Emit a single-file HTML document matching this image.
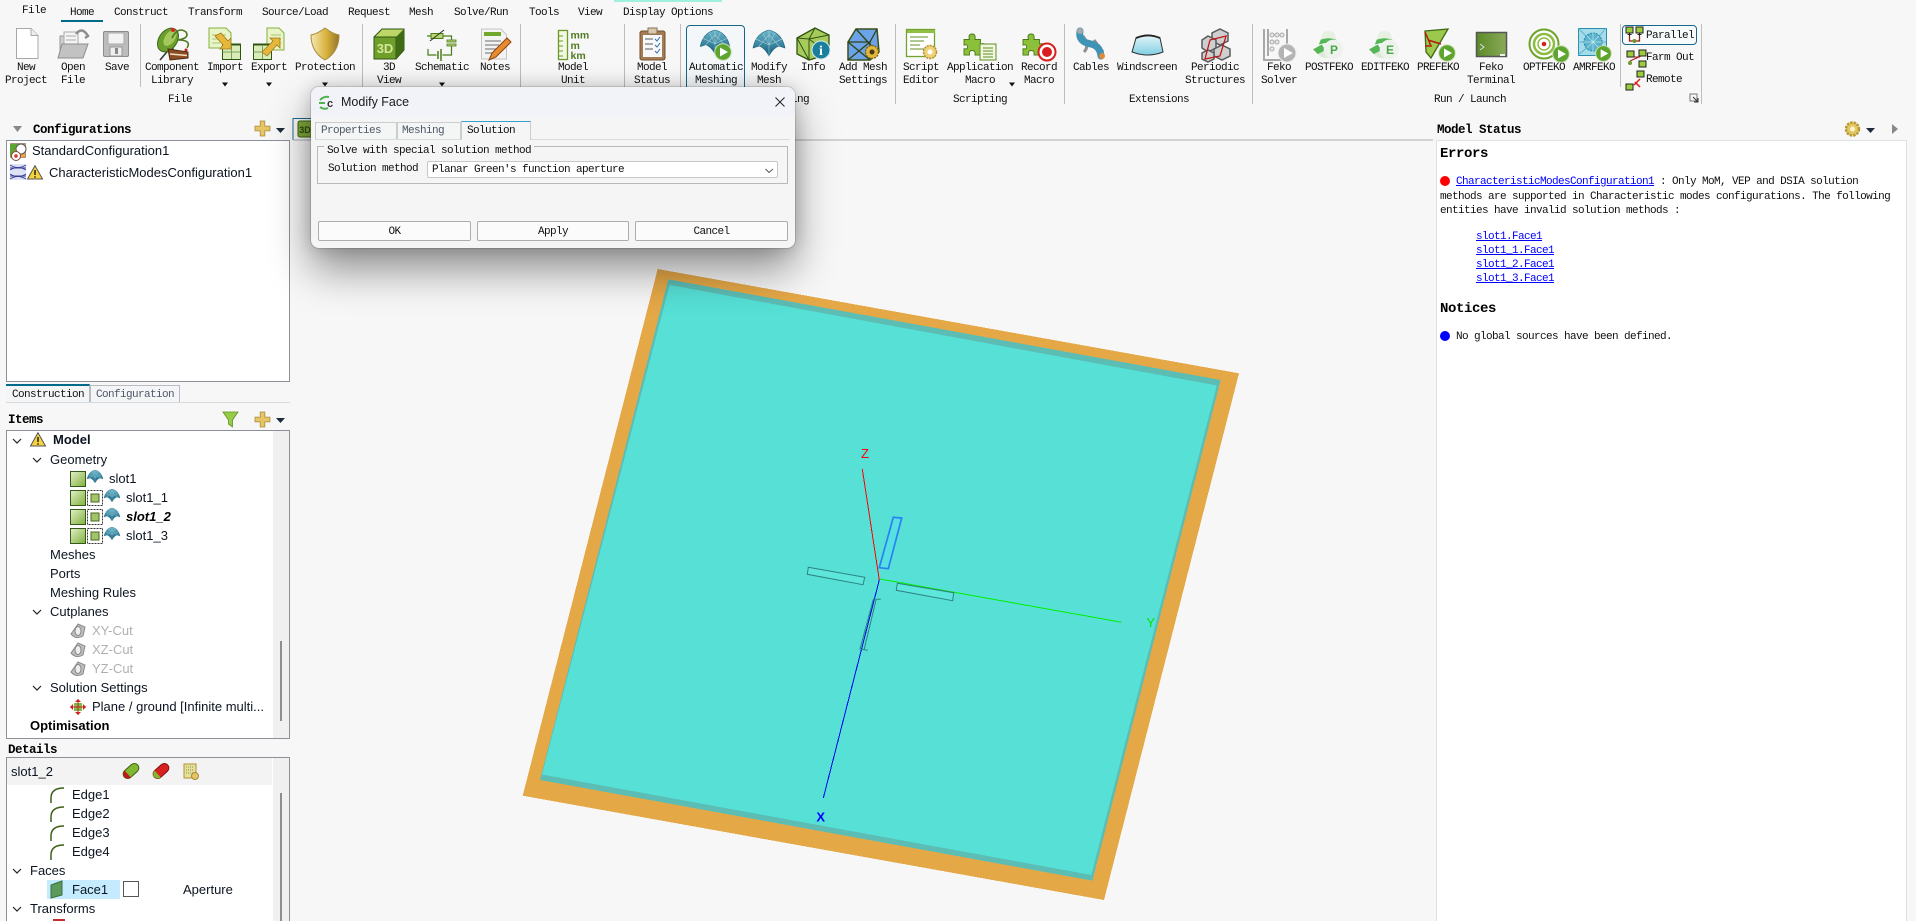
<!DOCTYPE html>
<html><head><meta charset="utf-8"><title>Modify Face</title>
<style>
html,body{margin:0;padding:0;width:1916px;height:921px;overflow:hidden;background:#f7f7f7}
#p{position:absolute;left:0;top:0;width:1916px;height:921px;overflow:hidden}
.t{position:absolute;white-space:nowrap;font:11px/14px "Liberation Mono",monospace;letter-spacing:-.6px;color:#111}
.c{transform:translateX(-50%)}
.b{font-weight:bold;font-size:12.5px;letter-spacing:-.5px;color:#000}
.h{font-weight:bold;font-size:14px;line-height:16px;letter-spacing:-.4px;color:#000}
.s{position:absolute;white-space:nowrap;font:13px/18px "Liberation Sans",sans-serif;color:#0c1420}
.g{color:#b0b0b0}
.box{position:absolute;box-sizing:border-box;background:#fff;border:1px solid #8b9099}
.l{position:absolute;background:#bdbdbd;width:1px}
a{color:#00f;text-decoration:underline}
svg{position:absolute;left:0;top:0;overflow:visible}
#dlg{position:absolute;left:311px;top:87px;width:484px;height:161px;background:#f5f5f5;border-radius:8px;box-shadow:0 22px 42px rgba(0,0,0,.42),0 0 18px rgba(0,0,0,.18);z-index:5;outline:1px solid rgba(0,0,0,.12)}
#dlg .tb{position:absolute;left:0;top:0;width:484px;height:30px;background:#f1f3f9;border-radius:8px 8px 0 0}
.btn{position:absolute;top:134px;height:20px;box-sizing:border-box;background:#fbfbfb;border:1px solid #adadad;border-radius:2px;text-align:center;font:11px/20px "Liberation Mono",monospace;letter-spacing:-.6px;color:#111}
.tab{position:absolute;box-sizing:border-box;border:1px solid #c9cdd0;border-bottom:none;background:#f4f5f5}
</style></head><body><div id="p">

<!-- top strip / menu -->
<div style="position:absolute;left:614px;top:0;width:108px;height:1.5px;background:#9ff0dd"></div>
<div style="position:absolute;left:61px;top:20px;width:42px;height:2px;background:#006a8a"></div>
<div class="t" style="left:22px;top:4px">File</div>
<div class="t" style="left:70px;top:6px">Home</div>
<div class="t" style="left:114px;top:6px">Construct</div>
<div class="t" style="left:188px;top:6px">Transform</div>
<div class="t" style="left:262px;top:6px">Source/Load</div>
<div class="t" style="left:348px;top:6px">Request</div>
<div class="t" style="left:409px;top:6px">Mesh</div>
<div class="t" style="left:454px;top:6px">Solve/Run</div>
<div class="t" style="left:529px;top:6px">Tools</div>
<div class="t" style="left:578px;top:6px">View</div>
<div class="t" style="left:623px;top:6px">Display Options</div>

<!-- separators -->
<div class="l" style="left:140px;top:24px;height:63px"></div>
<div class="l" style="left:362px;top:24px;height:80px"></div>
<div class="l" style="left:520px;top:24px;height:80px"></div>
<div class="l" style="left:624px;top:24px;height:80px"></div>
<div class="l" style="left:680px;top:24px;height:80px"></div>
<div class="l" style="left:895px;top:24px;height:80px"></div>
<div class="l" style="left:1064px;top:24px;height:80px"></div>
<div class="l" style="left:1252px;top:24px;height:80px"></div>
<div class="l" style="left:1620px;top:24px;height:63px"></div>
<div class="l" style="left:1701px;top:24px;height:80px"></div>

<div style="position:absolute;box-sizing:border-box;left:686px;top:25px;width:59px;height:70px;border:1px solid #15688a;border-radius:4px;background:#f3f7f9"></div>
<div style="position:absolute;box-sizing:border-box;left:1622px;top:25px;width:75px;height:20px;border:1px solid #15688a;border-radius:4px;background:#f8fbfc"></div>

<!-- ribbon labels -->
<div class="t c" style="left:26px;top:61px">New</div><div class="t c" style="left:26px;top:74px">Project</div>
<div class="t c" style="left:73px;top:61px">Open</div><div class="t c" style="left:73px;top:74px">File</div>
<div class="t c" style="left:117px;top:61px">Save</div>
<div class="t c" style="left:172px;top:61px">Component</div><div class="t c" style="left:172px;top:74px">Library</div>
<div class="t c" style="left:225px;top:61px">Import</div>
<div class="t c" style="left:269px;top:61px">Export</div>
<div class="t c" style="left:325px;top:61px">Protection</div>
<div class="t c" style="left:389px;top:61px">3D</div><div class="t c" style="left:389px;top:74px">View</div>
<div class="t c" style="left:442px;top:61px">Schematic</div>
<div class="t c" style="left:495px;top:61px">Notes</div>
<div class="t c" style="left:573px;top:61px">Model</div><div class="t c" style="left:573px;top:74px">Unit</div>
<div class="t c" style="left:652px;top:61px">Model</div><div class="t c" style="left:652px;top:74px">Status</div>
<div class="t c" style="left:716px;top:61px">Automatic</div><div class="t c" style="left:716px;top:74px">Meshing</div>
<div class="t c" style="left:769px;top:61px">Modify</div><div class="t c" style="left:769px;top:74px">Mesh</div>
<div class="t c" style="left:813px;top:61px">Info</div>
<div class="t c" style="left:863px;top:61px">Add Mesh</div><div class="t c" style="left:863px;top:74px">Settings</div>
<div class="t c" style="left:921px;top:61px">Script</div><div class="t c" style="left:921px;top:74px">Editor</div>
<div class="t c" style="left:980px;top:61px">Application</div><div class="t c" style="left:980px;top:74px">Macro</div>
<div class="t c" style="left:1039px;top:61px">Record</div><div class="t c" style="left:1039px;top:74px">Macro</div>
<div class="t c" style="left:1091px;top:61px">Cables</div>
<div class="t c" style="left:1147px;top:61px">Windscreen</div>
<div class="t c" style="left:1215px;top:61px">Periodic</div><div class="t c" style="left:1215px;top:74px">Structures</div>
<div class="t c" style="left:1279px;top:61px">Feko</div><div class="t c" style="left:1279px;top:74px">Solver</div>
<div class="t c" style="left:1329px;top:61px">POSTFEKO</div>
<div class="t c" style="left:1385px;top:61px">EDITFEKO</div>
<div class="t c" style="left:1438px;top:61px">PREFEKO</div>
<div class="t c" style="left:1491px;top:61px">Feko</div><div class="t c" style="left:1491px;top:74px">Terminal</div>
<div class="t c" style="left:1544px;top:61px">OPTFEKO</div>
<div class="t c" style="left:1594px;top:61px">AMRFEKO</div>
<div class="t" style="left:1646px;top:29px">Parallel</div>
<div class="t" style="left:1646px;top:51px">Farm Out</div>
<div class="t" style="left:1646px;top:73px">Remote</div>
<div class="t c" style="left:180px;top:93px">File</div>
<div class="t c" style="left:788px;top:93px">Meshing</div>
<div class="t c" style="left:980px;top:93px">Scripting</div>
<div class="t c" style="left:1159px;top:93px">Extensions</div>
<div class="t c" style="left:1470px;top:93px">Run / Launch</div>

<!-- canvas and icons -->
<svg width="1916" height="921" viewBox="0 0 1916 921">
<defs>
<linearGradient id="gr" x1="0" y1="0" x2="1" y2="1"><stop offset="0" stop-color="#e4f0c8"/><stop offset="1" stop-color="#7fb03c"/></linearGradient>
<linearGradient id="gold" x1="0" y1="0" x2="1" y2="0"><stop offset="0" stop-color="#f4e8b0"/><stop offset=".55" stop-color="#d8b23c"/><stop offset="1" stop-color="#96752a"/></linearGradient>
<linearGradient id="dome" x1="0" y1="0" x2="0" y2="1"><stop offset="0" stop-color="#6db6ca"/><stop offset="1" stop-color="#125f7c"/></linearGradient>
<linearGradient id="ter" x1="0" y1="0" x2="1" y2="0"><stop offset="0" stop-color="#5c8a26"/><stop offset="1" stop-color="#8aaa5c"/></linearGradient>
<linearGradient id="ws" x1="0" y1="0" x2="0" y2="1"><stop offset="0" stop-color="#e6f6fa"/><stop offset="1" stop-color="#7fcfe2"/></linearGradient>
<symbol id="dm" viewBox="0 0 32 26" overflow="visible"><path d="M0 18Q3 3 16 0Q29 3 32 18L26 16Q20 18 16 26Q12 18 6 16Z" fill="url(#dome)" stroke="#125f7c" stroke-width=".6"/><path d="M16 0V26M6 16L16 5L26 16M3 9L16 15L29 9M10 3L16 15L22 3" stroke="#b8e0ea" stroke-width=".7" fill="none" opacity=".7"/></symbol>
<symbol id="pl" viewBox="0 0 18 18" overflow="visible"><circle cx="9" cy="9" r="8.300" fill="#5da52e" stroke="#cfe0b8" stroke-width="1"/><path d="M6 4.500L14 9L6 13.500Z" fill="#fff"/></symbol>
<symbol id="arr" viewBox="0 0 6 4" overflow="visible"><path d="M0 0H6L3 4Z" fill="#111"/></symbol>
<symbol id="dd" viewBox="0 0 9 5" overflow="visible"><path d="M0 0H9L4.500 5Z" fill="#1c2c3c"/></symbol>
<symbol id="plus" viewBox="0 0 16 16" overflow="visible"><path d="M5.500 0H10.500V5.500H16V10.500H10.500V16H5.500V10.500H0V5.500H5.500Z" fill="#e5c666" stroke="#a8883a" stroke-width=".8"/></symbol>
<symbol id="warn" viewBox="0 0 16 15" overflow="visible"><path d="M8 .7L15.500 14H.5Z" fill="#f6d33c" stroke="#555" stroke-width="1"/><path d="M8 5V10M8 11.300V12.800" stroke="#222" stroke-width="1.500"/></symbol>
<symbol id="sq" viewBox="0 0 16 16" overflow="visible"><rect x=".5" y=".5" width="15" height="15" fill="url(#gr)" stroke="#35591a"/></symbol>
<symbol id="ds" viewBox="0 0 16 16" overflow="visible"><rect x=".5" y=".5" width="15" height="15" fill="none" stroke="#333" stroke-dasharray="2 1"/><rect x="4" y="4" width="8" height="8" fill="#a3c56a" stroke="#4a6a20"/></symbol>
<symbol id="cut" viewBox="0 0 16 16" overflow="visible"><path d="M1 11L8 1L15 4L13 13Q6 17 1 11Z" fill="#bdbdbd" stroke="#8a8a8a"/><ellipse cx="8" cy="8" rx="3" ry="4.500" fill="#eee" stroke="#888"/></symbol>
<symbol id="arc" viewBox="0 0 16 16" overflow="visible"><path d="M1 16V11Q1 1 14 1" stroke="#3e5f18" stroke-width="1.500" fill="none"/></symbol>
<symbol id="puz" viewBox="0 0 24 26" overflow="visible"><path d="M0 7H6Q4 1 9 1Q13 1 12 7H18V12Q24 10 24 15Q24 20 18 18V24H12Q13 19 9 19Q5 19 6 24H0V17Q4 18 4 15Q4 12 0 13Z" fill="#8dc03a" stroke="#4a7a18" stroke-width="1"/></symbol>
<symbol id="pf" viewBox="0 0 32 30" overflow="visible"><path d="M10 3Q16 -1 22 3L24 10H8Z" fill="#e6f1e2"/><path d="M8 10Q16 7 24 10L26 14Q16 12 6 15Z" fill="#55b656"/><path d="M0 20L9 15L13 21L5 25Z" fill="#55b656"/><path d="M5 25L13 21L18 28Q10 31 5 25Z" fill="#dcebd8"/><circle cx="21" cy="20" r="10" fill="#eef2ec"/></symbol>
<symbol id="net" viewBox="0 0 18 17" overflow="visible"><rect x="0" y="0" width="7" height="6" fill="#9ccc3c" stroke="#222"/><rect x="10" y="0" width="7" height="6" fill="#9ccc3c" stroke="#222"/><path d="M3.500 6V9M13.500 6V9M1.500 7.500H5.500M11.500 7.500H15.500" stroke="#222"/><path d="M3.500 9V14H13.500V9" fill="none" stroke="#9b1c14" stroke-width="1.300"/><circle cx="8.500" cy="14" r="2" fill="#6a9a30"/></symbol>
</defs>

<!-- 3D tab and line -->
<path d="M293 140V118.500H318" stroke="#1a6d8c" fill="none"/>
<path d="M293 140H1433" stroke="#a9adb2"/>
<rect x="298" y="121" width="16" height="16" rx="2" fill="#7fa93a" stroke="#3f5f12"/>
<text x="305" y="133" text-anchor="middle" font-family="Liberation Sans" font-size="9" font-weight="bold" fill="#2f4a0c">3D</text>

<!-- Plane -->
<g shape-rendering="crispEdges">
<polygon points="657.700,269 1239,373.300 1104,900 522.700,795.700" fill="#e5a847"/>
<polygon points="668.300,279.300 1220.700,380 1092.400,880.700 540,780" fill="#5cbdb5"/>
<polygon points="669.600,285 1216.800,385.500 1091.300,875 542,774.500" fill="#56e0d6"/>
<line x1="862.300" y1="469" x2="879.300" y2="580" stroke="#f00" stroke-width="1"/>
<line x1="879.300" y1="580" x2="823.300" y2="798" stroke="#0000f0" stroke-width="1"/>
<line x1="880" y1="579" x2="1121.700" y2="622.300" stroke="#00f000" stroke-width="1"/>
</g>
<polygon points="808.300,567.300 864.700,577.300 863,584.700 807.300,574.300" fill="#5ce6dc" stroke="#2f8380"/>
<polygon points="897.300,583.300 953.700,592.700 952.700,600.700 896.300,590.300" fill="#5ce6dc" stroke="#2f8380"/>
<polygon points="893.300,517.300 901.700,518 888.300,568.700 879.300,567.700" fill="#56e0e2" stroke="#2b80f2" stroke-width="1.700"/>
<path d="M880.700 599.300H873.300L860 649L867.700 650.300M876 600L864 650" fill="none" stroke="#2f8380"/>
<text x="865" y="458" text-anchor="middle" font-family="Liberation Sans" font-size="13" fill="#f00">Z</text>
<text x="820.700" y="821.500" text-anchor="middle" font-family="Liberation Sans" font-size="13" font-weight="bold" fill="#00f">X</text>
<text x="1150.700" y="627" text-anchor="middle" font-family="Liberation Sans" font-size="13" fill="#00e600">Y</text>

<!-- New -->
<path d="M16.500 28.500H31L38 35.500V58.500H16.500Z" fill="#fff" stroke="#a8a8a8"/><path d="M31 28.500V35.500H38" fill="#eee" stroke="#a8a8a8"/>
<!-- Open -->
<path d="M60 36H78V58H60Z" fill="#cfcfcf" stroke="#999"/><path d="M64 32H78V48H64Z" fill="#f4f4f4" stroke="#aaa"/><path d="M66 36H76M66 40H76M66 44H76" stroke="#aaa"/><path d="M58 58L62 44H88L83 58Z" fill="#c2c2c2" stroke="#8e8e8e"/><path d="M76 34Q82 26 88 36L85 38" fill="none" stroke="#8e8e8e" stroke-width="2.500"/>
<!-- Save -->
<rect x="103.500" y="31.500" width="25" height="25" rx="1.500" fill="#bcbcbc" stroke="#8c8c8c"/><rect x="108" y="33" width="16" height="11" fill="#f3f3f3" stroke="#aaa"/><rect x="110" y="47" width="12" height="9" fill="#eee" stroke="#999"/><rect x="115" y="48" width="3" height="6" fill="#888"/>
<!-- Component library -->
<path d="M172 46L160 60M172 46L176 58" stroke="#333" stroke-width="1.500"/>
<ellipse cx="168" cy="40" rx="9" ry="13" transform="rotate(35 168 40)" fill="#6c9e2c" stroke="#3f6618"/><ellipse cx="170" cy="38" rx="5" ry="9" transform="rotate(35 170 38)" fill="#a4c85c"/>
<path d="M172 38Q178 26 186 32Q190 38 178 40Q192 40 187 48" fill="none" stroke="#4f7a24" stroke-width="1.600"/><circle cx="173" cy="30" r="2" fill="#e02222"/><circle cx="186" cy="50" r="1.500" fill="#d01818"/>
<path d="M168 49L188 52V58L170 60Z" fill="#8c4d22" stroke="#4e2a10"/><path d="M170 54L187 55.500" stroke="#f0e0c0" stroke-width="1.500"/>
<!-- Import -->
<path d="M209 28H226L231 33V48H209Z" fill="#e9f4c8" stroke="#86b040"/><path d="M212 35H226M212 39H226M212 43H220" stroke="#a8c868"/><rect x="222.500" y="44.500" width="18" height="15" fill="#d8ecb8" stroke="#2f5410"/><path d="M222 44.500H241" stroke="#2f5410" stroke-width="2"/><path d="M222.500 52H240M231.500 45V59" stroke="#7f9f58"/><path d="M215 36L221 33L228 41L231 38V49H220L223 45Z" fill="#e5b83c" stroke="#a07a1c" stroke-width=".8"/>
<!-- Export -->
<path d="M267 28H279L284 33V50H267Z" fill="#e9f4c8" stroke="#86b040"/><path d="M271 35H281M271 39H281M271 43H281" stroke="#a8c868"/><rect x="253.500" y="44.500" width="18" height="15" fill="#d8ecb8" stroke="#2f5410"/><path d="M253 44.500H272" stroke="#2f5410" stroke-width="2"/><path d="M253.500 52H271M262.500 45V59" stroke="#7f9f58"/><path d="M262 52L273 41L270 38H280V48L277 45L267 56Z" fill="#e5b83c" stroke="#a07a1c" stroke-width=".8"/>
<!-- Protection -->
<path d="M325 28Q317 34 311 35Q311 52 325 60Q339 52 339 35Q333 34 325 28Z" fill="url(#gold)" stroke="#a98a3c"/>
<!-- 3D -->
<path d="M374 37L382 29H404V50L396 59H374Z" fill="#bcd668" stroke="#2f5410"/><rect x="374" y="37" width="22" height="22" fill="#6f9f2a" stroke="#2f5410"/><path d="M396 37L404 29V50L396 59Z" fill="#3f6a16"/><text x="385" y="53" text-anchor="middle" font-family="Liberation Sans" font-size="13" font-weight="bold" fill="#d4e89a">3D</text>
<!-- Schematic -->
<path d="M427 36H431M443 36H451.500V40M451.500 45V55H442.500M436.500 55H428V49" fill="none" stroke="#4b7c18" stroke-width="1.200"/><rect x="431" y="33.500" width="12" height="5" fill="#b6d670" stroke="#4b7c18"/><path d="M430 41L444 30" stroke="#333" stroke-width="1.100"/><rect x="447" y="40" width="9" height="2" fill="#b6d670" stroke="#4b7c18" stroke-width=".8"/><rect x="447" y="44" width="9" height="2" fill="#b6d670" stroke="#4b7c18" stroke-width=".8"/><path d="M438 51V59M441 49V61" stroke="#4b7c18" stroke-width="1.500"/>
<!-- Notes -->
<path d="M481.500 29H501L506.500 35V59H481.500Z" fill="#f3f3f3" stroke="#c4c4c4"/><rect x="484" y="32" width="17" height="4" fill="#6fa82c"/><path d="M485 41H501M485 45H499M485 49H496M485 53H493" stroke="#888" stroke-width="1.300"/><path d="M489 60L492 53L507 38L511 42L496 57Z" fill="#e88a2e" stroke="#8a4410"/>
<!-- Model unit -->
<rect x="558.500" y="30.500" width="9" height="29" fill="#f2f7e2" stroke="#6c9a2a" stroke-width="1.300"/><path d="M559 36H563M559 41H563M559 46H563M559 51H563M559 56H563" stroke="#6c9a2a"/>
<text x="570.500" y="38.500" font-family="Liberation Sans" font-size="10.500" font-weight="bold" fill="#4f7a20">mm</text><text x="570.500" y="49" font-family="Liberation Sans" font-size="10.500" font-weight="bold" fill="#4f7a20">m</text><text x="570.500" y="59" font-family="Liberation Sans" font-size="10.500" font-weight="bold" fill="#4f7a20">km</text>
<!-- Model status -->
<rect x="640" y="31" width="25" height="29" rx="2" fill="#a57b53" stroke="#6f5030"/><rect x="643" y="35" width="19" height="22" fill="#f8f8f8"/><rect x="648" y="28" width="9" height="6" fill="#d8c8b0" stroke="#8a7050"/><path d="M645 39H653M645 44H653M645 49H653" stroke="#777" stroke-width="1.200"/><path d="M655 39L657 41L660 37M655 45L657 47L660 43M655 51L657 53L660 49" stroke="#2b6fb0" fill="none"/>
<!-- Auto mesh -->
<use href="#dm" x="700" y="30" width="30" height="24"/><use href="#pl" x="714" y="43" width="18" height="18"/>
<!-- Modify mesh -->
<use href="#dm" x="753" y="30" width="32" height="26"/>
<!-- Info -->
<path d="M797 38L815 28L829 35V54L809 60L797 54Z" fill="#a6cb5c" stroke="#2f5410" stroke-width="1.300"/><path d="M797 38L809 60M809 39V60M797 38L809 39L829 35M809 39L829 54M815 28L809 39" stroke="#2f5410" fill="none"/><circle cx="821" cy="50" r="9" fill="#1a7f9f" stroke="#d8ecf2"/><text x="821" y="55" text-anchor="middle" font-family="Liberation Serif" font-size="14" font-weight="bold" fill="#fff">i</text>
<!-- Add mesh -->
<path d="M848 42L856 29H877L879 52L870 60H848Z" fill="#6ba2e8" stroke="#3a4f1a" stroke-width="1.500"/><path d="M848 42H870V60M870 42L877 29M848 42L870 60M870 42L848 60M856 29L877 52" stroke="#2e4410" stroke-width="1.300" fill="none"/><circle cx="872" cy="52" r="6.500" fill="#e0b83c" stroke="#7a5c10" stroke-width="1.300" stroke-dasharray="2 1"/><circle cx="872" cy="52" r="2.500" fill="#4a3810"/>
<!-- Script -->
<rect x="906.500" y="29.500" width="28" height="27" fill="#fff" stroke="#71a32c" stroke-width="1.300"/><rect x="907" y="30" width="28" height="3" fill="#8fc044"/><path d="M910 37H928M910 41H924M910 45H920M910 49H924" stroke="#5f8f20"/><circle cx="930" cy="52" r="6.500" fill="#edd27a" stroke="#b48e2a" stroke-width="1.500" stroke-dasharray="2 1"/><circle cx="930" cy="52" r="2.500" fill="#fff"/>
<!-- App macro -->
<use href="#puz" x="964" y="33" width="22" height="24"/><rect x="980" y="44" width="16" height="16" fill="#f2f7e2" stroke="#5f8f20"/><path d="M983 48H993M983 51H993M983 54H993M983 57H993" stroke="#5f8f20"/>
<!-- Record macro -->
<use href="#puz" x="1023" y="33" width="22" height="24"/><circle cx="1047" cy="52" r="8.500" fill="#fff" stroke="#d91f1f" stroke-width="2"/><circle cx="1047" cy="52" r="5" fill="#d91f1f"/>
<!-- Cables -->
<path d="M1083 36Q1090 46 1084 52M1094 40Q1098 46 1103 52" stroke="#8f8f8f" stroke-width="3" fill="none"/><path d="M1080 31Q1078 42 1091 44Q1100 46 1101 56" stroke="#3f93b4" stroke-width="7" fill="none" stroke-linecap="round"/><circle cx="1102" cy="56" r="3" fill="#e08a3c"/><circle cx="1080" cy="31" r="3" fill="#a8a8a8"/>
<!-- Windscreen -->
<path d="M1136 38Q1148 32 1160 38L1163 52Q1148 58 1132 52Z" fill="url(#ws)" stroke="#333" stroke-width="1"/><path d="M1136 38Q1148 33 1160 38" stroke="#222" stroke-width="1.800" fill="none"/>
<!-- Periodic -->
<g fill="#cfcfcf" stroke="#5a5a5a" stroke-width="1.500"><polygon points="1220,29 1228,33 1228,41 1220,45 1212,41 1212,33"/><polygon points="1208,36 1216,40 1216,48 1208,52 1202,48 1202,40"/><polygon points="1222,45 1230,49 1230,56 1222,60 1214,56 1214,49"/><polygon points="1208,50 1214,53 1214,59 1208,62 1202,59 1202,53"/></g><path d="M1210 40L1226 36L1220 56L1205 59Z" fill="none" stroke="#c01818" stroke-width="1.300"/>
<!-- Feko solver -->
<path d="M1264 29V60H1288M1268 29V56M1287 29V50" fill="none" stroke="#a8a8a8" stroke-width="2"/><g stroke="#aaa" fill="#e8e8e8"><circle cx="1272" cy="35" r="2"/><circle cx="1277" cy="35" r="2"/><circle cx="1282" cy="35" r="2"/><circle cx="1272" cy="42" r="2"/><circle cx="1277" cy="42" r="2"/><circle cx="1272" cy="49" r="2"/></g><circle cx="1287" cy="53" r="9" fill="#b4b4b4" stroke="#eee"/><path d="M1284 48L1293 53L1284 58Z" fill="#fff"/>
<!-- POST / EDIT -->
<use href="#pf" x="1313" y="30" width="31" height="29"/><text x="1334" y="54" text-anchor="middle" font-family="Liberation Sans" font-size="12" font-weight="bold" fill="#48a84a">P</text>
<use href="#pf" x="1369" y="30" width="31" height="29"/><text x="1390" y="54" text-anchor="middle" font-family="Liberation Sans" font-size="12" font-weight="bold" fill="#48a84a">E</text>
<!-- PRE -->
<path d="M1425 31L1448 29L1438 46L1431 58L1426 52Z" fill="#9cc84c" stroke="#406a14" stroke-width="1.300"/><path d="M1425 32L1431 46H1425M1428 40L1441 44" stroke="#b31a12" stroke-width="1.500" fill="none"/><use href="#pl" x="1438" y="44" width="18" height="18"/>
<!-- Terminal -->
<rect x="1476.500" y="32.500" width="30" height="24" fill="url(#ter)" stroke="#555" stroke-width="1.500"/><path d="M1480 44L1484 47L1480 50" stroke="#ddd" fill="none"/><rect x="1500" y="54" width="5" height="2" fill="#eee"/>
<!-- OPT -->
<circle cx="1544" cy="44" r="14.500" fill="#fff" stroke="#6ca32c" stroke-width="2"/><circle cx="1544" cy="44" r="10" fill="none" stroke="#8cbc44" stroke-width="2.500"/><circle cx="1544" cy="44" r="6" fill="none" stroke="#8cbc44" stroke-width="1.500"/><circle cx="1544" cy="44" r="2.300" fill="#d91f1f"/><use href="#pl" x="1552" y="45" width="18" height="18"/>
<!-- AMR -->
<rect x="1578.500" y="28.500" width="28" height="27" fill="#a4dcea" stroke="#2a8eb0"/><path d="M1578 28L1588 38M1606 28L1598 38M1578 55L1588 47M1606 55L1598 47M1578 42H1584M1602 42H1606" stroke="#5fb2cc"/><circle cx="1593" cy="42" r="9" fill="#5ab2cc" stroke="#2f8aa8" stroke-dasharray="2 1"/><path d="M1584 42H1602M1593 33V51M1587 36L1599 48M1599 36L1587 48" stroke="#bfe6ee" stroke-width=".7"/><use href="#pl" x="1595" y="45" width="17" height="17"/>
<!-- Parallel etc -->
<use href="#net" x="1626" y="27" width="18" height="17"/>
<g transform="translate(1627,50)"><path d="M7 7L13 7M3 11L14 6" stroke="#b01818" fill="none"/><rect x="0" y="1" width="7" height="6" fill="#9ccc3c" stroke="#222"/><rect x="12" y="0" width="7" height="6" fill="#9ccc3c" stroke="#222"/><rect x="12" y="11" width="7" height="6" fill="#9ccc3c" stroke="#222"/><circle cx="3" cy="13" r="2" fill="#6a9a30"/></g>
<g transform="translate(1626,71)"><rect x="0" y="13" width="7" height="6" fill="#9ccc3c" stroke="#222"/><rect x="11" y="0" width="7" height="6" fill="#9ccc3c" stroke="#222"/><path d="M8 14L14 8M9 11L14 16" stroke="#e01818" stroke-width="1.500" fill="none"/></g>
<path d="M1690 94H1697V101H1690Z" fill="none" stroke="#777"/><path d="M1693 97L1698 102M1698 98V102H1694" stroke="#333" fill="none"/>

<!-- dropdown arrows -->
<use href="#arr" x="222" y="82.500" width="6" height="4"/><use href="#arr" x="266" y="82.500" width="6" height="4"/><use href="#arr" x="322" y="82.500" width="6" height="4"/><use href="#arr" x="439" y="82.500" width="6" height="4"/><use href="#arr" x="1009" y="82.500" width="6" height="4"/>

<!-- Panel icons -->
<path d="M13 126H22L17.500 132Z" fill="#888"/>
<use href="#plus" x="255" y="121" width="15" height="15"/><use href="#dd" x="276" y="128" width="9" height="5"/>
<use href="#plus" x="255" y="412" width="15" height="15"/><use href="#dd" x="276" y="418" width="9" height="5"/>
<path d="M223 412H238L232.500 420V427L228.500 424V420Z" fill="#96cc48" stroke="#5e8f22" stroke-width=".8"/>
<!-- Gear / right -->
<circle cx="1852.500" cy="129" r="6.500" fill="#e2c765" stroke="#b89a34" stroke-width="2.500" stroke-dasharray="2.500 1"/><circle cx="1852.500" cy="129" r="2.500" fill="#fff5c8"/>
<use href="#dd" x="1866" y="128" width="9" height="5"/>
<path d="M1892 124L1898 129L1892 134Z" fill="#888"/>
</svg>

<!-- Configurations -->
<div class="t b" style="left:33px;top:123px">Configurations</div>
<div class="box" style="left:6px;top:140px;width:284px;height:242px"></div>
<div class="t b" style="left:8px;top:413px">Items</div>
<div class="t b" style="left:8px;top:743px">Details</div>
<div class="s" style="left:32px;top:142px">StandardConfiguration1</div>
<div class="s" style="left:49px;top:164px">CharacteristicModesConfiguration1</div>
<svg width="1916" height="921" viewBox="0 0 1916 921" style="z-index:2">
<rect x="10.500" y="143.500" width="15" height="14" fill="#f4a040" stroke="#555" stroke-width=".5"/><path d="M10 144H20L10 157Z" fill="#5da52e"/><circle cx="21" cy="149" r="5" fill="#fff" stroke="#555"/><circle cx="16" cy="156" r="4.500" fill="#fff" stroke="#7a4a3c"/><circle cx="16" cy="156" r="1.800" fill="#d93030"/>
<rect x="10" y="164" width="16" height="16" fill="#dfe2f4"/><path d="M10 165Q18 170 26 165M10 170Q18 165 26 170M10 174Q18 179 26 174M10 179Q18 174 26 179M10 168H26M10 176H26" stroke="#3b3f9c" fill="none"/>
<use href="#warn" x="27" y="165" width="16" height="15"/>
</svg>

<!-- Bottom tabs -->
<div style="position:absolute;left:6px;top:402px;width:284px;height:1px;background:#d8dbde"></div>
<div style="position:absolute;box-sizing:border-box;left:6px;top:384px;width:84px;height:18px;background:#f4f5f6;border-top:2px solid #006a8a;border-right:1px solid #b8bcc2"></div>
<div style="position:absolute;box-sizing:border-box;left:90px;top:385px;width:90px;height:17px;background:#f4f5f6;border:1px solid #b8bcc2;border-bottom:none"></div>
<div class="t" style="left:12px;top:388px;font-size:11px">Construction</div>
<div class="t" style="left:96px;top:388px;color:#4e5868">Configuration</div>

<!-- Items box -->
<div class="box" style="left:6px;top:430px;width:284px;height:309px"></div>
<div style="position:absolute;left:273px;top:431px;width:16px;height:307px;background:#f0f0f0"></div>
<div style="position:absolute;left:280px;top:641px;width:2px;height:80px;background:#8e8e8e"></div>

<svg width="1916" height="921" viewBox="0 0 1916 921" style="z-index:2">
<g fill="none" stroke="#222" stroke-width="1.200"><path d="M13 439L17 443L21 439"/><path d="M33 458L37 462L41 458"/><path d="M33 610L37 614L41 610"/><path d="M33 686L37 690L41 686"/></g>
<use href="#warn" x="30" y="432" width="16" height="15"/>
<use href="#sq" x="70" y="471" width="16" height="16"/><use href="#dm" x="87" y="470" width="16" height="13"/>
<use href="#sq" x="70" y="490" width="16" height="16"/><use href="#ds" x="87" y="490" width="16" height="16"/><use href="#dm" x="104" y="489" width="16" height="13"/>
<use href="#sq" x="70" y="509" width="16" height="16"/><use href="#ds" x="87" y="509" width="16" height="16"/><use href="#dm" x="104" y="508" width="16" height="13"/>
<use href="#sq" x="70" y="528" width="16" height="16"/><use href="#ds" x="87" y="528" width="16" height="16"/><use href="#dm" x="104" y="527" width="16" height="13"/>
<use href="#cut" x="70" y="623" width="16" height="16"/><use href="#cut" x="70" y="642" width="16" height="16"/><use href="#cut" x="70" y="661" width="16" height="16"/>
<g transform="translate(78,707)"><rect x="-4" y="-4" width="8" height="8" fill="#7ac04a"/><path d="M-8 0L-5 -3V3ZM8 0L5 -3V3ZM0 -8L-3 -5H3ZM0 8L-3 5H3Z" fill="#d02020"/><path d="M-8 0H8M0 -8V8" stroke="#d02020"/></g>
</svg>

<div class="s" style="left:53px;top:431px;font-weight:bold">Model</div>
<div class="s" style="left:50px;top:451px">Geometry</div>
<div class="s" style="left:109px;top:470px">slot1</div>
<div class="s" style="left:126px;top:489px">slot1_1</div>
<div class="s" style="left:126px;top:508px;font-weight:bold;font-style:italic;color:#000">slot1_2</div>
<div class="s" style="left:126px;top:527px">slot1_3</div>
<div class="s" style="left:50px;top:546px">Meshes</div>
<div class="s" style="left:50px;top:565px">Ports</div>
<div class="s" style="left:50px;top:584px">Meshing Rules</div>
<div class="s" style="left:50px;top:603px">Cutplanes</div>
<div class="s g" style="left:92px;top:622px">XY-Cut</div>
<div class="s g" style="left:92px;top:641px">XZ-Cut</div>
<div class="s g" style="left:92px;top:660px">YZ-Cut</div>
<div class="s" style="left:50px;top:679px">Solution Settings</div>
<div class="s" style="left:92px;top:698px">Plane / ground [Infinite multi...</div>
<div class="s" style="left:30px;top:717px;font-weight:bold;color:#000">Optimisation</div>

<!-- Details box -->
<div class="box" style="left:6px;top:757px;width:284px;height:170px"></div>
<div style="position:absolute;left:7px;top:758px;width:265px;height:27px;background:#f3f3f3"></div>
<div style="position:absolute;left:273px;top:758px;width:16px;height:163px;background:#f0f0f0"></div>
<div style="position:absolute;left:280px;top:793px;width:2px;height:128px;background:#8e8e8e"></div>
<div style="position:absolute;left:47px;top:880px;width:73px;height:19px;background:#c4ebff"></div>
<div style="position:absolute;box-sizing:border-box;left:123px;top:881px;width:16px;height:16px;background:#fff;border:1px solid #555"></div>
<svg width="1916" height="921" viewBox="0 0 1916 921" style="z-index:2">
<use href="#arc" x="50" y="787" width="16" height="16"/><use href="#arc" x="50" y="806" width="16" height="16"/><use href="#arc" x="50" y="825" width="16" height="16"/><use href="#arc" x="50" y="844" width="16" height="16"/>
<g transform="translate(131,771) rotate(-42)"><rect x="-9" y="-4.500" width="18" height="9" rx="4.500" fill="#82b830" stroke="#3c5e10"/><path d="M-9 0A4.500 4.500 0 0 1 -4.500 -4.500V4.500A4.500 4.500 0 0 1 -9 0Z" fill="#c01818"/></g>
<g transform="translate(161,771) rotate(-42)"><rect x="-9" y="-4.500" width="18" height="9" rx="4.500" fill="#d82020" stroke="#801010"/><path d="M-9 0A4.500 4.500 0 0 1 -4.500 -4.500V4.500A4.500 4.500 0 0 1 -9 0Z" fill="#82b830"/></g>
<rect x="184" y="764" width="12" height="14" fill="#e8df9c" stroke="#b09030"/><path d="M186 767H194M186 770H194M186 773H194" stroke="#7a9a4a" stroke-dasharray="1 1"/><circle cx="195" cy="776" r="3.500" fill="#e5c666" stroke="#a8883a"/>
<path d="M51 885L62 881V895L51 898Z" fill="#5c9a5c" stroke="#3a703a"/>
<path d="M13 869L17 873L21 869M13 907L17 911L21 907" fill="none" stroke="#222" stroke-width="1.200"/>
<rect x="53" y="919" width="12" height="2" fill="#c03030"/>
</svg>
<div class="s" style="left:11px;top:763px">slot1_2</div>
<div class="s" style="left:72px;top:786px">Edge1</div>
<div class="s" style="left:72px;top:805px">Edge2</div>
<div class="s" style="left:72px;top:824px">Edge3</div>
<div class="s" style="left:72px;top:843px">Edge4</div>
<div class="s" style="left:30px;top:862px">Faces</div>
<div class="s" style="left:72px;top:881px">Face1</div>
<div class="s" style="left:183px;top:881px">Aperture</div>
<div class="s" style="left:30px;top:900px">Transforms</div>

<!-- Right panel -->
<div class="t b" style="left:1437px;top:123px">Model Status</div>
<div style="position:absolute;box-sizing:border-box;left:1436px;top:140px;width:471px;height:790px;background:#fff;border:1px solid #e0e0e0"></div>
<div class="t h" style="left:1440px;top:146px">Errors</div>
<svg width="1916" height="921" viewBox="0 0 1916 921" style="z-index:2"><circle cx="1445" cy="181" r="5" fill="#f00"/><circle cx="1445" cy="336" r="5" fill="#00f"/></svg>
<div class="t" style="left:1456px;top:175px"><a>CharacteristicModesConfiguration1</a> : Only MoM, VEP and DSIA solution</div>
<div class="t" style="left:1440px;top:190px">methods are supported in Characteristic modes configurations. The following</div>
<div class="t" style="left:1440px;top:204px">entities have invalid solution methods :</div>
<div class="t" style="left:1476px;top:230px"><a>slot1.Face1</a></div>
<div class="t" style="left:1476px;top:244px"><a>slot1_1.Face1</a></div>
<div class="t" style="left:1476px;top:258px"><a>slot1_2.Face1</a></div>
<div class="t" style="left:1476px;top:272px"><a>slot1_3.Face1</a></div>
<div class="t h" style="left:1440px;top:301px">Notices</div>
<div class="t" style="left:1456px;top:330px">No global sources have been defined.</div>

<!-- Dialog -->
<div id="dlg">
 <div class="tb"></div>
 <svg width="484" height="161" viewBox="0 0 484 161">
  <path d="M9 13Q13 9 18 10M8 16H14M9 20Q13 23 17 21" stroke="#4fb04f" stroke-width="2" fill="none"/>
  <text x="16" y="20" font-family="Liberation Sans" font-size="11" font-weight="bold" fill="#333">c</text>
  <path d="M464.500 10.500L473.500 19.500M473.500 10.500L464.500 19.500" stroke="#222" stroke-width="1"/>
 </svg>
 <div class="s" style="left:30px;top:6px;font-size:12.500px;color:#1a1a1a">Modify Face</div>
 <div style="position:absolute;left:4px;top:52px;width:475px;height:1px;background:#d8dde0"></div>
 <div class="tab" style="left:4px;top:35px;width:82px;height:17px"></div>
 <div class="tab" style="left:86px;top:35px;width:64px;height:17px"></div>
 <div class="tab" style="left:150px;top:34px;width:70px;height:19px;border-top:1px solid #35a0d0;background:#f5f5f5;z-index:2"></div>
 <div class="t" style="left:10px;top:37px;color:#4e5868">Properties</div>
 <div class="t" style="left:91px;top:37px;color:#4e5868">Meshing</div>
 <div class="t" style="left:156px;top:37px;z-index:3">Solution</div>
 <div style="position:absolute;box-sizing:border-box;left:6px;top:59px;width:471px;height:38px;border:1px solid #b6babd"></div>
 <div class="t" style="left:13px;top:57px;background:#f5f5f5;padding:0 3px">Solve with special solution method</div>
 <div class="t" style="left:17px;top:75px">Solution method</div>
 <div style="position:absolute;box-sizing:border-box;left:116px;top:74px;width:351px;height:17px;background:#fff;border:1px solid #c8c8c8;border-radius:2px"></div>
 <div class="t" style="left:121px;top:76px">Planar Green's function aperture</div>
 <svg width="484" height="161" viewBox="0 0 484 161"><path d="M454.500 82L458 85.500L462 82" fill="none" stroke="#555"/></svg>
 <div class="btn" style="left:7px;width:153px">OK</div>
 <div class="btn" style="left:166px;width:152px">Apply</div>
 <div class="btn" style="left:324px;width:153px">Cancel</div>
</div>
</div></body></html>
